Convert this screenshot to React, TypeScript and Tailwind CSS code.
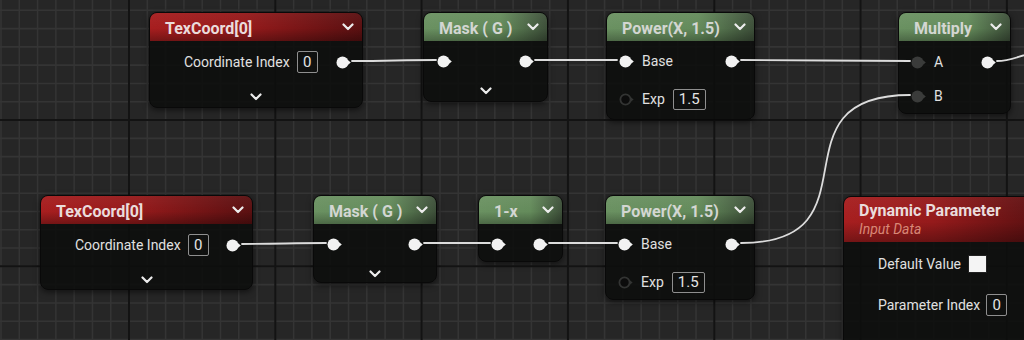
import React from 'react';

function Pin({ kind = 'on' }: { kind?: 'on' | 'dim' | 'hollow' }) {
  if (kind === 'on') {
    return (
      <svg width="15" height="13" viewBox="0 0 15 13" className="shrink-0">
        <circle cx="6.5" cy="6.5" r="6" fill="#f2f2f2" />
        <path d="M11.2 3.5 L14.8 6.5 L11.2 9.5 Z" fill="#f2f2f2" />
      </svg>
    );
  }
  if (kind === 'dim') {
    return (
      <svg width="15" height="13" viewBox="0 0 15 13" className="shrink-0">
        <circle cx="6.5" cy="6.5" r="6" fill="#3a3b3a" />
        <path d="M11.2 3.5 L14.8 6.5 L11.2 9.5 Z" fill="#3a3b3a" />
      </svg>
    );
  }
  return (
    <svg width="15" height="13" viewBox="0 0 15 13" className="shrink-0">
      <circle cx="6.5" cy="6.5" r="5.1" fill="#0c0c0c" stroke="#333433" strokeWidth="1.8" />
      <path d="M11.6 4 L14.6 6.5 L11.6 9 Z" fill="#333433" />
    </svg>
  );
}

function Chevron() {
  return (
    <svg width="12" height="8" viewBox="0 0 12 8" className="shrink-0">
      <path d="M1.5 1.5 L6 6 L10.5 1.5" fill="none" stroke="#ececec" strokeWidth="2.2" strokeLinecap="round" strokeLinejoin="round" />
    </svg>
  );
}

function ValueBox({ value, className }: { value: string; className: string }) {
  return (
    <div className={`flex items-center justify-center border border-[#8f8f8f] rounded-[2px] text-[15px] text-[#e4e4e4] leading-none ${className}`}>
      {value}
    </div>
  );
}

const NODE = 'absolute rounded-[8px] overflow-hidden bg-[rgba(13,14,13,0.9)] border border-[#090909] shadow-[0_2px_6px_rgba(0,0,0,0.55)]';
const GREEN =
  'bg-[linear-gradient(180deg,rgba(255,255,255,0.05)_0%,rgba(0,0,0,0)_55%,rgba(0,0,0,0.28)_100%),linear-gradient(90deg,#6a9161_0%,#648b5b_62%,#3d4f39_100%)]';
const RED =
  'bg-[linear-gradient(180deg,rgba(255,255,255,0.04)_0%,rgba(0,0,0,0)_55%,rgba(0,0,0,0.3)_100%),linear-gradient(90deg,#a71e1f_0%,#951a1b_45%,#5a1011_100%)]';

function Header({ title, green }: { title: string; green?: boolean }) {
  return (
    <div className={`h-[28px] flex items-center justify-between pl-[15px] pr-[8px] ${green ? GREEN : RED}`}>
      <span className={`pt-[3px] text-[16px] font-bold leading-none ${green ? 'text-[#d3d6d2]' : 'text-[#eadcdc]'}`}>{title}</span>
      <Chevron />
    </div>
  );
}

function TexCoordNode({ className }: { className: string }) {
  return (
    <div className={`${NODE} ${className}`}>
      <Header title="TexCoord[0]" />
      <div className="pt-[9px]">
        <div className="h-[24px] flex items-center pl-[34px] pr-[11px]">
          <span className="text-[14px] text-[#e0e0e0]">Coordinate Index</span>
          <ValueBox value="0" className="ml-[7px] w-[21px] h-[22px]" />
          <div className="ml-auto">
            <Pin />
          </div>
        </div>
        <div className="mt-[11px] h-[24px] flex items-center justify-center">
          <Chevron />
        </div>
      </div>
    </div>
  );
}

function MaskNode({ className }: { className: string }) {
  return (
    <div className={`${NODE} ${className}`}>
      <Header title="Mask ( G )" green />
      <div className="pt-[8px]">
        <div className="h-[24px] flex items-center justify-between pl-[13px] pr-[13px]">
          <Pin />
          <Pin />
        </div>
        <div className="mt-[6px] h-[24px] flex items-center justify-center">
          <Chevron />
        </div>
      </div>
    </div>
  );
}

function PowerNode({ className }: { className: string }) {
  return (
    <div className={`${NODE} ${className}`}>
      <Header title="Power(X, 1.5)" green />
      <div className="pt-[8px]">
        <div className="h-[24px] flex items-center pl-[12px] pr-[14px]">
          <Pin />
          <span className="ml-[8px] text-[14px] text-[#e0e0e0]">Base</span>
          <div className="ml-auto">
            <Pin />
          </div>
        </div>
        <div className="mt-[14px] h-[24px] flex items-center pl-[12px] pr-[14px]">
          <Pin kind="hollow" />
          <span className="ml-[8px] text-[14px] text-[#e0e0e0]">Exp</span>
          <ValueBox value="1.5" className="ml-[8px] w-[33px] h-[21px]" />
        </div>
      </div>
    </div>
  );
}

export default function App() {
  const minorX = Array.from({ length: 57 }, (_, k) => 1 + 18.29 * k);
  const minorY = Array.from({ length: 20 }, (_, k) => 10.3 + 18.29 * (k - 1));
  const majorX = Array.from({ length: 8 }, (_, k) => 129 + 146.32 * (k - 1));
  const majorY = Array.from({ length: 3 }, (_, k) => 120 + 146.32 * (k - 1));

  return (
    <div className="relative w-[1024px] h-[340px] overflow-hidden bg-[#262626] font-[family-name:Roboto,sans-serif]">
      {/* grid */}
      <svg className="absolute inset-0" width="1024" height="340">
        {minorX.map((x) => (
          <line key={'mx' + x} x1={x} y1={0} x2={x} y2={340} stroke="#343434" strokeWidth="1.6" />
        ))}
        {minorY.map((y) => (
          <line key={'my' + y} x1={0} y1={y} x2={1024} y2={y} stroke="#343434" strokeWidth="1.6" />
        ))}
        {majorX.map((x) => (
          <line key={'Mx' + x} x1={x} y1={0} x2={x} y2={340} stroke="#131313" strokeWidth="2" />
        ))}
        {majorY.map((y) => (
          <line key={'My' + y} x1={0} y1={y} x2={1024} y2={y} stroke="#131313" strokeWidth="2" />
        ))}
      </svg>

      {/* top row */}
      <TexCoordNode className="left-[149px] top-[12px] w-[214px] h-[96px]" />
      <MaskNode className="left-[423px] top-[12px] w-[125px] h-[90px]" />
      <PowerNode className="left-[606px] top-[12px] w-[149px] h-[108px]" />

      <div className={`${NODE} left-[898px] top-[12px] w-[113px] h-[102px]`}>
        <Header title="Multiply" green />
        <div className="pt-[9px]">
          <div className="h-[24px] flex items-center pl-[12px] pr-[14px]">
            <Pin kind="dim" />
            <span className="ml-[8px] text-[14px] text-[#e0e0e0]">A</span>
            <div className="ml-auto">
              <Pin />
            </div>
          </div>
          <div className="mt-[10px] h-[24px] flex items-center pl-[12px] pr-[14px]">
            <Pin kind="dim" />
            <span className="ml-[8px] text-[14px] text-[#e0e0e0]">B</span>
          </div>
        </div>
      </div>

      {/* bottom row */}
      <TexCoordNode className="left-[40px] top-[195px] w-[213px] h-[95px]" />
      <MaskNode className="left-[313px] top-[195px] w-[124px] h-[88px]" />

      <div className={`${NODE} left-[478px] top-[195px] w-[85px] h-[67px]`}>
        <Header title="1-x" green />
        <div className="pt-[8px]">
          <div className="h-[24px] flex items-center justify-between pl-[12px] pr-[14px]">
            <Pin />
            <Pin />
          </div>
        </div>
      </div>

      <PowerNode className="left-[605px] top-[195px] w-[150px] h-[105px]" />

      <div className={`${NODE} left-[843px] top-[196px] w-[200px] h-[170px]`}>
        <div className={`h-[45px] pl-[15px] pt-[5px] flex flex-col ${RED}`}>
          <span className="h-[18px] leading-[18px] text-[16px] font-bold text-[#eadcdc]">Dynamic Parameter</span>
          <span className="h-[18px] leading-[18px] text-[14px] italic text-[#d98877]">Input Data</span>
        </div>
        <div className="pt-[10px]">
          <div className="h-[24px] flex items-center pl-[34px]">
            <span className="text-[14px] text-[#e0e0e0]">Default Value</span>
            <div className="ml-[7px] w-[19px] h-[18px] bg-[#f4f4f4] border border-[#222]" />
          </div>
          <div className="mt-[17px] h-[24px] flex items-center pl-[34px]">
            <span className="text-[14px] text-[#e0e0e0]">Parameter Index</span>
            <ValueBox value="0" className="ml-[6px] w-[21px] h-[22px]" />
          </div>
        </div>
      </div>

      {/* wires */}
      <svg className="absolute inset-0 pointer-events-none" width="1024" height="340">
        <g fill="none" stroke="#dcdcdc" strokeWidth="1.8" strokeLinecap="round">
          <path d="M352 61 C390 61 400 60 436 60" />
          <path d="M535 60 L617 60" />
          <path d="M741 60 C820 60 830 61 910 61" />
          <path d="M997 61 C1010 61 1016 57 1032 53" />
          <path d="M242 244 C280 244 290 243 326 243" />
          <path d="M424 243 L490 243" />
          <path d="M549 243 L617 243" />
          <path d="M741 243 C883 243 767 95 910 95" />
        </g>
      </svg>
    </div>
  );
}
